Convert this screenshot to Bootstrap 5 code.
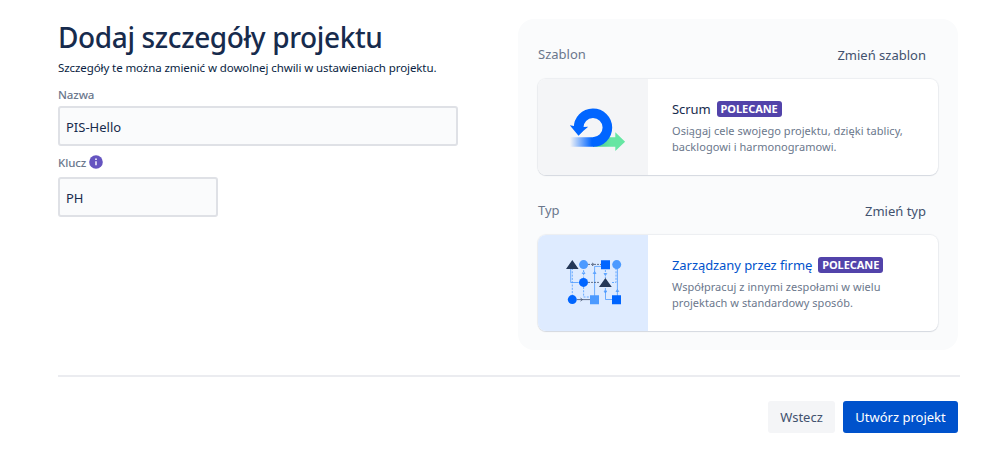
<!DOCTYPE html>
<html lang="pl">
<head>
<meta charset="utf-8">
<meta name="viewport" content="width=device-width, initial-scale=1">
<title>Dodaj szczegóły projektu</title>
<link href="https://cdn.jsdelivr.net/npm/bootstrap@5.3.0/dist/css/bootstrap.min.css" rel="stylesheet">
<style>
body{font-family:"Noto Sans","Open Sans",sans-serif;font-size:13px;line-height:20px;color:#172b4d;background:#fff;overflow:hidden}
.page{width:902px;margin-left:58px;padding-top:19px}
.content-row{padding-right:2px}
.form-side{width:400px}
.page-title{font-size:28px;line-height:36px;font-weight:500;letter-spacing:-.37px;white-space:nowrap}
.lead-text{font-size:11.5px;line-height:20px;letter-spacing:-.09px;margin-top:3px;white-space:nowrap;color:#091e42}
.field-label{font-size:11.5px;line-height:16px;font-weight:500;letter-spacing:-.1px;color:#6b778c}
.name-label{margin:9px 0 3px}
.key-label{margin:9px 0 6px}
.key-label svg{margin-left:3px;margin-top:-2px}
.field{height:40px;border:2px solid #dfe1e6;border-radius:3px;background:#fafbfc;padding:1px 6px 0;color:#172b4d}
.field-key{width:160px}
.panel{width:440px;height:331px;border-radius:16px;background:#fafbfc;padding:25px 20px 0}
.panel-head{height:20px;color:#6b778c}
.second{margin-top:25px}
.change{color:#42526e;margin-right:12px;margin-top:1px;text-decoration:none}
.choice{height:96px;margin-top:15px;border-radius:8px;background:#fff;box-shadow:0 1px 1px rgba(9,30,66,.1),0 0 1px 1px rgba(9,30,66,.06);overflow:hidden}
.thumb{width:110px;background:#f4f5f7}
.thumb-blue{background:#deebff}
.choice-body{padding:20px 0 0 24px}
.choice-name{letter-spacing:-.07px}
.type-name{color:#0052cc}
.tag{width:65px;height:16px;margin-left:6px;border-radius:3px;background:#5243aa;color:#fff;font-size:11px;line-height:16px;font-weight:700;letter-spacing:-.05px;text-align:center;white-space:nowrap}
.desc{font-size:11px;line-height:16px;letter-spacing:.05px;color:#6b778c;margin-top:4px;white-space:nowrap}
.rule{height:2px;background:#ebecf0;margin-top:25px}
.action{height:32px;line-height:32px;padding:0;border:0;border-radius:3px;font-size:13px;white-space:nowrap}
.action-back{background:#f4f5f7;color:#42526e;width:67px}
.action-go{background:#0052cc;color:#fff;width:115px}
</style>
</head>
<body>
<main class="page">
  <div class="content-row d-flex justify-content-between">
    <section class="form-side">
      <h1 class="page-title mb-0">Dodaj szczegóły projektu</h1>
      <p class="lead-text mb-0">Szczegóły te można zmienić w dowolnej chwili w ustawieniach projektu.</p>
      <div class="field-label name-label">Nazwa</div>
      <div class="field d-flex align-items-center">PIS-Hello</div>
      <div class="field-label key-label d-flex align-items-center">Klucz
        <svg width="14" height="14" viewBox="0 0 14 14"><circle cx="7" cy="7" r="6.8" fill="#6554c0"/><path d="M7 6.2v4" stroke="#fff" stroke-width="1.4"/><circle cx="7" cy="4.2" r=".85" fill="#fff"/></svg>
      </div>
      <div class="field field-key d-flex align-items-center">PH</div>
    </section>
    <section class="panel">
      <div class="panel-head d-flex justify-content-between"><span>Szablon</span><a class="change" href="#">Zmień szablon</a></div>
      <div class="choice d-flex">
        <div class="thumb">
          <svg width="110" height="96" viewBox="538 79 110 96">
            <defs><linearGradient id="fade" x1="570" x2="593" y1="0" y2="0" gradientUnits="userSpaceOnUse"><stop offset="0" stop-color="#0065ff" stop-opacity="0"/><stop offset=".95" stop-color="#0065ff"/></linearGradient>
            <linearGradient id="green" x1="598" x2="611" y1="0" y2="0" gradientUnits="userSpaceOnUse"><stop offset="0" stop-color="#4fcb90"/><stop offset="1" stop-color="#66e6a3"/></linearGradient></defs>
            <path d="M594 137.2h21.3v-5l9.8 9.5-9.8 9.4v-4.4H594z" fill="url(#green)"/>
            <path d="M570 137.2h24v9.5h-24z" fill="url(#fade)"/>
            <path d="M578.6 127.9a14.4 14.4 0 1 1 14.4 14.1" fill="none" stroke="#0065ff" stroke-width="9.6"/>
            <path d="M569.8 125.3l4.2.7 9.5 1 4.7-.2-4.7 4-5 5z" fill="#0065ff"/>
          </svg>
        </div>
        <div class="choice-body">
          <div class="d-flex align-items-center"><span class="choice-name">Scrum</span><span class="tag">POLECANE</span></div>
          <div class="desc">Osiągaj cele swojego projektu, dzięki tablicy,<br>backlogowi i harmonogramowi.</div>
        </div>
      </div>
      <div class="panel-head second d-flex justify-content-between"><span>Typ</span><a class="change" href="#">Zmień typ</a></div>
      <div class="choice d-flex">
        <div class="thumb thumb-blue">
          <svg width="110" height="96" viewBox="538 235 110 96" fill="none">
            <g stroke="#4c9aff" stroke-width=".8">
              <path d="M570.7 268v14.5h8M594.6 296v-29.6h7M605.5 291v8.5h7M617.4 268v28M605.4 288v5"/>
              <path d="M572.3 268v27M583.6 270v9M583.6 287v10h7M616 268v14.5h-5M605.4 270v8" stroke-dasharray="2 1.3"/>
              <path d="M593.2 273.5l1.4-2 1.4 2zM604 273.5l1.4 2 1.4-2zM604 291l1.4 2 1.4-2zM616 291.5l1.4-2 1.4 2zM582.2 273.5l1.4-2 1.4 2z"/>
            </g>
            <g stroke="#42526e" stroke-width=".8"><path d="M588 264.4h13M588 282.4h12" stroke-dasharray="2 1"/><path d="M577 299.6h13M592 262.9l2 1.5-2 1.5M580.5 298.1l2 1.5-2 1.5"/></g>
            <path d="M566 269l6.3-9 6.3 9zM599 287l6.4-9 6.4 9z" fill="#253858"/>
            <g fill="#4c9aff"><circle cx="583.6" cy="264.6" r="4.5"/><circle cx="616.7" cy="264.6" r="4.5"/><path d="M590 295.2h9v9h-9z"/></g>
            <g fill="#0065ff"><circle cx="583.5" cy="282.4" r="4.5"/><circle cx="572.3" cy="299.6" r="4.5"/><path d="M601 260.3h9v9h-9zM612 295.2h9v9h-9z"/></g>
          </svg>
        </div>
        <div class="choice-body">
          <div class="d-flex align-items-center"><span class="choice-name type-name">Zarządzany przez firmę</span><span class="tag">POLECANE</span></div>
          <div class="desc">Współpracuj z innymi zespołami w wielu<br>projektach w standardowy sposób.</div>
        </div>
      </div>
    </section>
  </div>
  <div class="rule"></div>
  <div class="content-row d-flex justify-content-end gap-2 mt-4">
    <button class="btn action action-back">Wstecz</button>
    <button class="btn action action-go">Utwórz projekt</button>
  </div>
</main>
<script src="https://cdn.jsdelivr.net/npm/bootstrap@5.3.0/dist/js/bootstrap.bundle.min.js"></script>
</body>
</html>
